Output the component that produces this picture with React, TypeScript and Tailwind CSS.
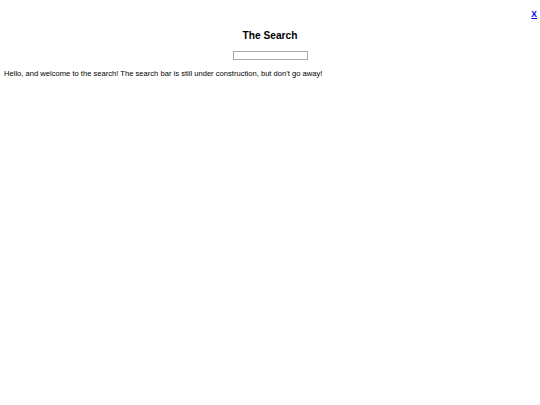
import React from 'react';

const App = () => {
  return (
    <div className="min-h-screen bg-white text-black" style={{ fontFamily: '"Liberation Sans", Arial, sans-serif' }}>
      <div className="flex justify-end pt-[10px] pr-[3px]">
        <a href="#" className="text-[8.5px] font-bold text-[#0000ee] underline leading-none">X</a>
      </div>
      <h1 className="mt-[12px] text-center text-[10.2px] font-bold leading-none">The Search</h1>
      <div className="mt-[10px] flex justify-center">
        <input type="text" className="h-[9px] w-[75px] border border-[#a9a9a9] bg-white" />
      </div>
      <p className="mt-[10px] px-[4px] text-[7.6px] leading-none">
        Hello, and welcome to the search! The search bar is still under construction, but don't go away!
      </p>
    </div>
  );
};

export default App;
